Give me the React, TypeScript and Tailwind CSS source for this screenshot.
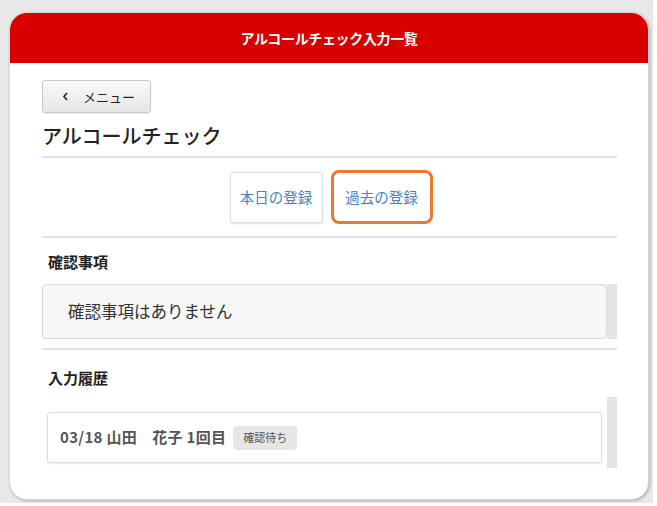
import React from 'react';

const font = { fontFamily: '"Noto Sans CJK JP", "Noto Sans", sans-serif' };

const Divider = ({ className = '' }: { className?: string }) => (
  <div className={`h-[2px] bg-[#e2e2e2] ${className}`} />
);

export default function App() {
  return (
    <div className="w-[657px] h-[506px] bg-white overflow-hidden" style={font}>
      <div className="w-[653px] h-[503px] bg-[#e8e8e8] pl-[9px] pt-[12px]">
        <div className="w-[640px] h-[488px] bg-white rounded-[18px] overflow-hidden shadow-[1px_1px_3px_rgba(0,0,0,0.25)] border border-[#d6d6d6]">
          {/* header */}
          <div className="h-[50px] bg-[#d90000] flex items-center justify-center">
            <span className="text-white font-bold text-[14px] tracking-tight">アルコールチェック入力一覧</span>
          </div>

          <div className="pl-[32px] pr-[31px] pt-[17px] flex flex-col">
            {/* back button */}
            <button className="w-[109px] h-[33px] rounded-[3px] border border-[#c8c8c8] bg-gradient-to-b from-[#fafafa] to-[#e6e6e6] shadow-[0_1px_1px_rgba(0,0,0,0.08)] flex items-center pl-[19px] text-[13px] text-[#222]">
              <svg width="7" height="9" viewBox="0 0 7 9" className="mr-[14px]">
                <path d="M5 1 L2 4.5 L5 8" fill="none" stroke="#333" strokeWidth="1.8" />
              </svg>
              <span>メニュー</span>
            </button>

            <h1 className="mt-[8px] h-[30px] leading-[30px] text-[20px] font-medium text-[#222]">アルコールチェック</h1>
            <Divider className="mt-[5px]" />

            {/* tabs */}
            <div className="mt-[12px] h-[54px] flex items-center justify-center gap-[8px] pl-[3px]">
              <button className="w-[93px] h-[51px] bg-white border border-[#dcdcdc] rounded-[3px] shadow-[0_1px_2px_rgba(0,0,0,0.12)] text-[14.5px] text-[#4a7fc4]">
                本日の登録
              </button>
              <button className="w-[102px] h-[54px] bg-white border-[3px] border-[#ec7a2c] rounded-[8px] text-[14.5px] text-[#4a7fc4]">
                過去の登録
              </button>
            </div>
            <Divider className="mt-[12px]" />

            {/* confirmations */}
            <div className="mt-[14px] h-[20px] leading-[20px] pl-[6px] text-[15px] font-bold text-[#222]">確認事項</div>
            <div className="mt-[12px] h-[55px] flex">
              <div className="flex-1 bg-[#f7f7f7] border border-[#d8d8d8] rounded-[4px] flex items-center pl-[25px] text-[16.5px] text-[#333]">
                確認事項はありません
              </div>
              <div className="w-[10px] bg-[#e4e4e4]" />
            </div>
            <Divider className="mt-[9px]" />

            {/* history */}
            <div className="mt-[18px] h-[20px] leading-[20px] pl-[6px] text-[15px] font-bold text-[#222]">入力履歴</div>
            <div className="mt-[9px] h-[71px] flex">
              <div className="flex-1 pt-[15px] pb-[5px] pl-[5px] pr-[5px]">
                <div className="h-[51px] bg-white border border-[#dcdcdc] rounded-[3px] shadow-[0_1px_2px_rgba(0,0,0,0.08)] flex items-center pl-[12px] gap-[7px]">
                  <span className="text-[15px] font-bold text-[#555] tracking-[0.3px] whitespace-pre">03/18 山田　花子 1回目</span>
                  <span className="h-[24px] px-[10px] rounded-[4px] bg-[#e6e6e6] text-[11px] text-[#555] flex items-center">確認待ち</span>
                </div>
              </div>
              <div className="w-[10px] bg-[#e4e4e4]" />
            </div>
          </div>
        </div>
      </div>
    </div>
  );
}
